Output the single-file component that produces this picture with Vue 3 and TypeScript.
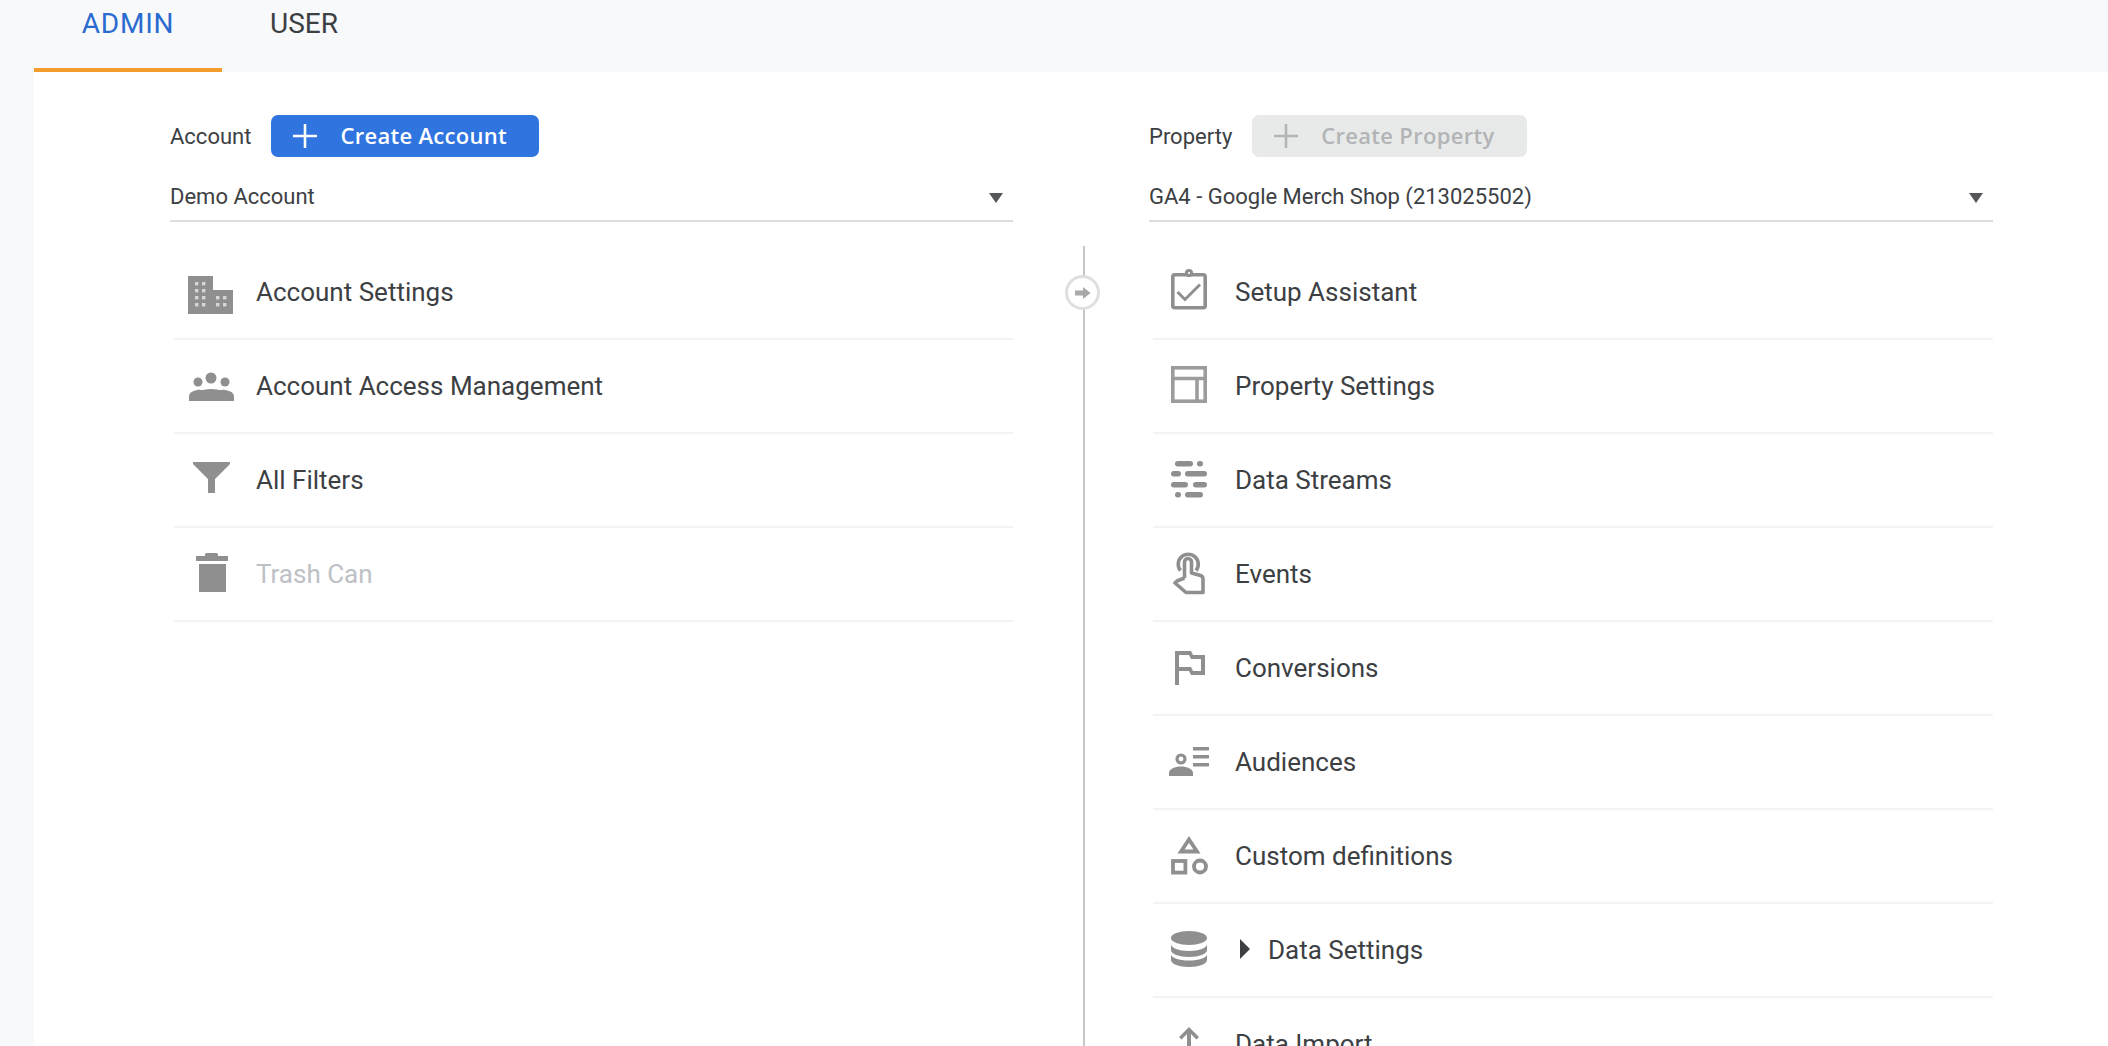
<script setup lang="ts">
interface Row {
  label: string
  icon: string
  muted?: boolean
  expander?: boolean
}

const accountRows: Row[] = [
  { label: 'Account Settings', icon: 'building' },
  { label: 'Account Access Management', icon: 'group' },
  { label: 'All Filters', icon: 'filter' },
  { label: 'Trash Can', icon: 'trash', muted: true },
]

const propertyRows: Row[] = [
  { label: 'Setup Assistant', icon: 'setup' },
  { label: 'Property Settings', icon: 'layout' },
  { label: 'Data Streams', icon: 'streams' },
  { label: 'Events', icon: 'touch' },
  { label: 'Conversions', icon: 'flag' },
  { label: 'Audiences', icon: 'audience' },
  { label: 'Custom definitions', icon: 'shapes' },
  { label: 'Data Settings', icon: 'database', expander: true },
  { label: 'Data Import', icon: 'upload' },
]

const columns = [
  { title: 'Account', action: 'Create Account', value: 'Demo Account', disabled: false, rows: accountRows },
  { title: 'Property', action: 'Create Property', value: 'GA4 - Google Merch Shop (213025502)', disabled: true, rows: propertyRows },
]

const windows: [number, number][] = [
  [9, 15], [16, 15], [9, 22], [16, 22], [9, 29], [16, 29], [9, 36], [16, 36],
  [30, 29], [37, 29], [30, 36], [37, 36],
]
</script>

<template>
  <div class="page">
    <nav class="tabs">
      <a class="tab tab-active">ADMIN</a>
      <a class="tab tab-user">USER</a>
    </nav>
    <main class="panel">
      <template v-for="(col, idx) in columns" :key="col.title">
        <div v-if="idx === 1" class="spine">
          <div class="spine-line"></div>
          <div class="spine-dot">
            <svg width="16" height="14" viewBox="0 0 16 14">
              <path d="M0 4.5H8V1L15.5 7L8 13V9.5H0Z" fill="#a8a8a8" />
            </svg>
          </div>
        </div>
        <section class="col">
          <div class="col-head">
            <span class="col-title">{{ col.title }}</span>
            <button class="create" :class="{ 'create-off': col.disabled }">
              <svg class="plus" width="26" height="26" viewBox="0 0 26 26">
                <path d="M13 1V25M1 13H25" fill="none" stroke="currentColor" stroke-width="2.6" />
              </svg>
              <span class="create-text">{{ col.action }}</span>
            </button>
          </div>
          <div class="picker">
            <span>{{ col.value }}</span>
            <i class="caret"></i>
          </div>
          <ul class="list">
            <li v-for="row in col.rows" :key="row.label" class="row" :class="{ 'row-muted': row.muted }">
              <svg class="icon" width="48" height="48" viewBox="0 0 48 48">
                <g v-if="row.icon === 'building'" class="soft">
                  <path d="M2 9H27V23H47V47H2Z" fill="#8f8f8f" />
                  <rect v-for="(w, i) in windows" :key="i" :x="w[0]" :y="w[1]" width="3.4" height="3.4" fill="#d6d6d6" />
                </g>
                <g v-else-if="row.icon === 'group'" class="soft" fill="#8f8f8f">
                  <circle cx="25" cy="17" r="5.5" />
                  <circle cx="12" cy="21" r="4.5" />
                  <circle cx="39" cy="21" r="4.5" />
                  <path d="M3 40V35.5C3 31 8 29.5 13 28.5C15 30 19 28 25 28C31 28 35 30 37 28.5C43 29.5 48 31 48 35.5V40Z" />
                </g>
                <path v-else-if="row.icon === 'filter'" class="soft" d="M7 7H44L44 9L29 24V38H22V24L7 9Z" fill="#8f8f8f" />
                <g v-else-if="row.icon === 'trash'" class="soft" fill="#8f8f8f">
                  <rect x="19" y="4" width="13" height="4" rx="1.5" />
                  <rect x="10" y="7" width="32" height="5" />
                  <rect x="13" y="15" width="27" height="28" />
                </g>
                <g v-else-if="row.icon === 'setup'" class="faint" fill="none" stroke="#8f8f8f" stroke-width="3.6">
                  <rect x="7.8" y="7.8" width="32.4" height="33" rx="2" />
                  <circle cx="24" cy="6" r="2.6" fill="#fff" stroke-width="3" />
                  <path d="M12.5 25L20 32.5L35 17.5" stroke-width="3" />
                </g>
                <g v-else-if="row.icon === 'layout'" class="faint" fill="none" stroke="#9c9c9c" stroke-width="3.6">
                  <rect x="7.8" y="6.8" width="32.4" height="33.4" />
                  <path d="M7.8 17.5H40.2M32 17.5V40.2" />
                </g>
                <g v-else-if="row.icon === 'streams'" class="faint" fill="#8f8f8f">
                  <rect x="10" y="6" width="18" height="5.4" rx="2.7" />
                  <rect x="32" y="6" width="6" height="5.4" rx="2.7" />
                  <rect x="6" y="16" width="10" height="5.4" rx="2.7" />
                  <rect x="20" y="16" width="22" height="5.4" rx="2.7" />
                  <rect x="6" y="27" width="17" height="5.4" rx="2.7" />
                  <rect x="28" y="27" width="14" height="5.4" rx="2.7" />
                  <rect x="10" y="37" width="6" height="5.4" rx="2.7" />
                  <rect x="20" y="37" width="18" height="5.4" rx="2.7" />
                </g>
                <g v-else-if="row.icon === 'touch'" class="faint" fill="none" stroke="#8f8f8f" stroke-width="3.6" stroke-linejoin="round">
                  <path d="M15.5 21.5A10 10 0 1 1 31 21.5" />
                  <path d="M19.5 29V13A3.5 3.5 0 0 1 26.5 13V24L35.5 26.5Q38 27.3 38 30V43.5H21L10 34L12 32L19.5 29" />
                </g>
                <path
                  v-else-if="row.icon === 'flag'"
                  class="faint"
                  transform="scale(2)"
                  d="M14 6l-1-2H5v17h2v-7h5l1 2h7V6h-6zm4 8h-4l-1-2H7V6h5l1 2h5v6z"
                  fill="#8f8f8f"
                />
                <g v-else-if="row.icon === 'audience'" class="faint" fill="#8f8f8f">
                  <circle cx="16" cy="22" r="4" fill="none" stroke="#8f8f8f" stroke-width="3.2" />
                  <path d="M4 39V36C4 32 10 29.5 16 29.5C22 29.5 28 32 28 36V39Z" />
                  <rect x="28" y="10" width="16" height="3.5" />
                  <rect x="28" y="18" width="16" height="3.5" />
                  <rect x="28" y="26" width="16" height="3.5" />
                </g>
                <g v-else-if="row.icon === 'shapes'" class="faint" fill="none" stroke="#8f8f8f">
                  <path d="M24 8.5L32 20.5H16Z" stroke-width="3.8" />
                  <rect x="8" y="30" width="12.4" height="11.6" stroke-width="3.8" />
                  <circle cx="35" cy="35.5" r="6" stroke-width="3.8" />
                </g>
                <g v-else-if="row.icon === 'database'" class="faint" fill="#8f8f8f">
                  <ellipse cx="24" cy="13" rx="18" ry="7" />
                  <path d="M6 19C6 23 14 26 24 26S42 23 42 19V25C42 29 34 32 24 32S6 29 6 25Z" />
                  <path d="M6 29C6 33 14 35.5 24 35.5S42 33 42 29V35C42 39 34 42 24 42S6 39 6 35Z" />
                </g>
                <path v-else-if="row.icon === 'upload'" class="faint" d="M24 8L34 18L31.5 20.5L26 15V44H22V15L16.5 20.5L14 18Z" fill="#8f8f8f" />
              </svg>
              <i v-if="row.expander" class="expander"></i>
              <span class="row-label">{{ row.label }}</span>
            </li>
          </ul>
        </section>
      </template>
    </main>
  </div>
</template>

<style>
html,
body {
  margin: 0;
  background: #f8f9fa;
  overflow: hidden;
}
</style>

<style scoped>
.page {
  height: 1046px;
  overflow: hidden;
  display: flex;
  flex-direction: column;
  font-family: Roboto, "Liberation Sans", sans-serif;
  color: #3c4043;
  background: #f8f9fa;
}
.tabs {
  flex: none;
  height: 72px;
  margin-left: 34px;
  display: flex;
}
.tab {
  box-sizing: border-box;
  width: 188px;
  height: 72px;
  padding-top: 9px;
  text-align: center;
  font-size: 28px;
  line-height: 30px;
  color: #3c4043;
}
.tab-user {
  width: 164px;
}
.tab-active {
  color: #2a6bd0;
  letter-spacing: 0.8px;
  border-bottom: 4px solid #f29d2c;
}
.panel {
  flex: 1;
  margin-left: 34px;
  padding: 43px 115px 0 136px;
  background: #fff;
  display: grid;
  grid-template-columns: 843px 136px 844px;
  align-items: start;
}
.col-head {
  height: 42px;
  display: flex;
  align-items: center;
  gap: 20px;
}
.col-title {
  font-size: 22px;
}
.create {
  height: 42px;
  box-sizing: border-box;
  display: flex;
  align-items: center;
  gap: 22px;
  padding: 0 32px 0 21px;
  border: 0;
  border-radius: 7px;
  background: #3074e0;
  color: #fff;
  font-family: "Open Sans", Roboto, sans-serif;
  font-size: 22px;
  line-height: 40px;
  font-weight: 600;
  letter-spacing: 0.3px;
}
.create-text {
  margin-top: -2px;
}
.create-off {
  background: #e8eaea;
  color: #b2b4b6;
}
.picker {
  box-sizing: border-box;
  height: 65px;
  padding: 25px 10px 0 0;
  display: flex;
  justify-content: space-between;
  align-items: flex-start;
  border-bottom: 2px solid #dadce0;
  font-size: 22px;
  line-height: 30px;
}
.caret {
  width: 0;
  height: 0;
  margin-top: 11px;
  border-left: 7.5px solid transparent;
  border-right: 7.5px solid transparent;
  border-top: 10px solid #54565a;
}
.list {
  list-style: none;
  margin: 24px 0 0;
  padding: 0 0 0 4px;
}
.row {
  box-sizing: border-box;
  height: 94px;
  padding: 0 0 2px 12px;
  display: flex;
  align-items: center;
  border-bottom: 2px solid #f1f3f4;
  font-size: 26px;
}
.icon {
  flex: none;
  margin-right: 22px;
  overflow: visible;
}
.soft {
  filter: blur(0.5px);
}
.faint {
  filter: blur(0.3px);
}
.row-label {
  position: relative;
  top: 1px;
}
.row-muted {
  color: #bdc1c6;
}
.expander {
  width: 0;
  height: 0;
  margin: 0 18px 0 5px;
  border-top: 10px solid transparent;
  border-bottom: 10px solid transparent;
  border-left: 10px solid #3c4043;
}
.spine {
  position: relative;
  margin: 131px 0 0 70px;
  height: 900px;
}
.spine-line {
  width: 2px;
  height: 100%;
  background: #c6c6c6;
}
.spine-dot {
  position: absolute;
  left: -18px;
  top: 29px;
  box-sizing: border-box;
  width: 35px;
  height: 35px;
  border: 3px solid #dfdfdf;
  border-radius: 50%;
  background: #fff;
  display: flex;
  align-items: center;
  justify-content: center;
  filter: blur(0.4px);
}
</style>
